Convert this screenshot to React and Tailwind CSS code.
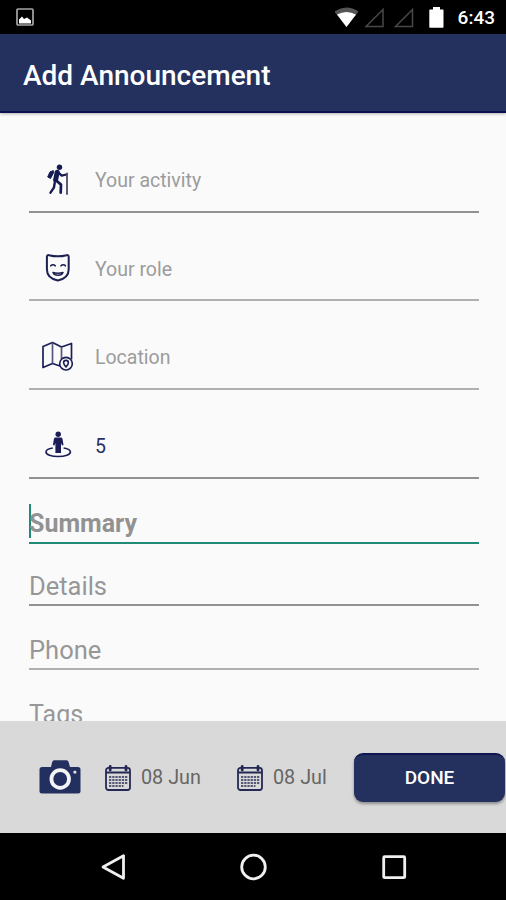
import React from "react";

function Hiker() {
  return (
    <svg viewBox="0 0 40 40" className="h-10 w-10 text-[#151a52]" fill="none" stroke="currentColor" strokeLinecap="round" strokeLinejoin="round">
      <circle cx="21.500" cy="6.200" r="2.700" fill="currentColor" stroke="none" />
      <path d="M15 9.700l-3 1.200-2.300 5 2.800 1.600 3.200-6z" fill="currentColor" strokeWidth="1" />
      <path d="M19.200 11.300l-1.600 7.700" strokeWidth="5" />
      <path d="M20.500 11.700l3.200 3 4.800-1.200" strokeWidth="2.300" />
      <path d="M18.800 20l4.200 3.600-.3 8" strokeWidth="2.700" />
      <path d="M16.700 22l-.8 4.700-3.400 5" strokeWidth="2.400" />
      <path d="M29 12.500V33" stroke="#4a4a62" strokeWidth="1.800" />
    </svg>
  );
}

function Mask() {
  return (
    <svg viewBox="0 0 40 40" className="h-10 w-10 text-[#1d2050]" fill="none" stroke="currentColor" strokeLinecap="round" strokeLinejoin="round">
      <path d="M8.900 6.700c0-1.200 1-1.900 2.200-1.500 5.700 1.500 11.700 1.500 17.400 0 1.200-.4 2.200.3 2.200 1.500v12.600C30.700 25.500 26 29.300 19.800 30.500 13.600 29.300 8.900 25.500 8.900 19.300z" strokeWidth="2" />
      <path d="M12.800 15.800c1.200-1.500 3.300-1.500 4.400 0M23 15.800c1.200-1.500 3.300-1.500 4.400 0" strokeWidth="1.600" />
      <path d="M15 22.500c3.200 1 6.800 1 10 0-.8 2-2.800 2.700-5 2.700s-4.200-.7-5-2.700z" strokeWidth="1.500" />
    </svg>
  );
}

function MapIcon() {
  return (
    <svg viewBox="0 0 40 40" className="h-10 w-10 text-[#1b1e56]" fill="none" stroke="currentColor" strokeWidth="1.700" strokeLinejoin="round">
      <path d="M23.500 28.500l-9-3-9.500 4V8.500l9.500-4L23.500 9l10-3.500v16" />
      <path d="M14.500 4.500V25.500M23.500 9v12" stroke="#55577e" />
      <circle cx="28" cy="25.700" r="6.300" fill="#fafafa" strokeWidth="1.600" />
      <path d="M28 29c-1.600-1.900-2.400-3.100-2.400-4.200a2.400 2.400 0 0 1 4.800 0c0 1.100-.8 2.300-2.400 4.200z" strokeWidth="1.600" />
    </svg>
  );
}

function Person() {
  return (
    <svg viewBox="0 0 40 40" className="h-10 w-10 text-[#1b1e56]" fill="currentColor">
      <circle cx="20.200" cy="7.200" r="2.700" />
      <path d="M17.600 10.500h5.200c1 0 1.500.6 1.700 1.500l1 6-1.500.6-1-2.700V26h-5.600V15.900l-1 2.700-1.500-.6 1-6c.2-.9.700-1.500 1.700-1.500z" />
      <path d="M14.800 21C10.800 21.700 8 23.100 8 24.900c0 2.700 5.200 4.600 12.200 4.600s12.200-1.900 12.200-4.600c0-1.800-2.800-3.200-6.800-3.900" fill="none" stroke="currentColor" strokeWidth="1.700" />
    </svg>
  );
}

function Camera() {
  return (
    <svg viewBox="0 0 42 34" className="h-[34px] w-[42px]">
      <path d="M3 7h9l1.200-5Q13.700.3 15.200.3h12.400q1.500 0 2 1.700l1.400 5h8Q41.500 7 41.500 9.500v21.500q0 2.500-2.500 2.500H3Q.5 33.500.5 31V9.500Q.5 7 3 7z" fill="#23305f" />
      <circle cx="21.200" cy="19" r="8.800" fill="#23305f" stroke="#f4f4f6" strokeWidth="3.800" />
      <rect x="34.500" y="10.800" width="2.800" height="2.800" rx=".7" fill="#e4e5ec" />
    </svg>
  );
}

function Calendar() {
  return (
    <svg viewBox="0 0 26 26" className="h-[26px] w-[26px]" fill="none" stroke="#242854">
      <rect x="1" y="2.800" width="24" height="22.200" rx="2.500" strokeWidth="1.800" />
      <path d="M1 7.500h24" strokeWidth="2" />
      <path d="M5.200 1.500v3.500M21 1.500v3.500" strokeWidth="2.800" strokeLinecap="round" />
      <path d="M4 12h18.500M4 15h18.500M4 18h18.500M4 21h14.500" stroke="#565975" strokeWidth="1.900" strokeDasharray="2.300 .9" />
    </svg>
  );
}

function IconRow({ icon, text, row, tone }) {
  return (
    <div className={`flex shrink-0 items-end border-b-2 pl-[9px] ${row}`}>
      {icon}
      <span className={`ml-[17px] flex h-10 items-center text-[19.500px] ${tone}`}>{text}</span>
    </div>
  );
}

export default function App() {
  return (
    <div className="flex h-[900px] w-[506px] flex-col overflow-hidden bg-[#fafafa] font-['Roboto','Liberation_Sans',sans-serif]">
      <div className="flex h-[34px] shrink-0 items-center bg-black pl-4 pr-[11px] text-white">
        <svg viewBox="0 0 18 18" className="h-[18px] w-[18px]">
          <rect x="1" y="1" width="16" height="16" rx="1" fill="none" stroke="#a5a5a5" strokeWidth="1.700" />
          <path d="M3 15.500v-4l3-3 2 2.500 3-1.500 4 3v3z" fill="#fff" />
        </svg>
        <svg viewBox="0 0 112 24" className="ml-auto h-6 w-[112px]">
          <path d="M-.5 6.500Q11.500-1.500 23.500 6.500L11.500 22z" fill="#555" />
          <path d="M2 9.500Q11.500 4.500 21 9.500L11.500 22z" fill="#fff" />
          <path d="M31 21.500h17V4.500zM60.500 21.500h17V4.500z" fill="none" stroke="#484848" strokeWidth="1.500" />
          <path d="M95 4.500h3V2h7v2.500h3q.5 0 .5.500v17q0 .7-.7.700H95q-.7 0-.7-.7V5.200q0-.7.700-.7z" fill="#fff" />
        </svg>
        <span className="ml-[11px] mt-[3px] text-[19px] font-medium">6:43</span>
      </div>

      <header className="z-10 flex h-[79px] shrink-0 items-center border-b-2 border-[#0b1150] bg-[#24315e] pl-[23px] pt-[7px] text-[28px] font-medium text-white shadow-[0_1px_3px_rgba(0,0,0,0.3)]">
        Add Announcement
      </header>

      <main className="flex min-h-0 flex-1 flex-col overflow-hidden pl-[29px] pr-[27px]">
        <IconRow icon={<Hiker />} text="Your activity" row="h-[100px] pb-[10px] border-[#929292]" tone="text-[#9c9c9c]" />
        <IconRow icon={<Mask />} text="Your role" row="h-[88px] pb-[9px] border-[#b0b0b0]" tone="text-[#9c9c9c]" />
        <IconRow icon={<MapIcon />} text="Location" row="h-[89px] pb-[10px] border-[#b0b0b0]" tone="text-[#9c9c9c]" />
        <IconRow icon={<Person />} text="5" row="h-[89px] pb-[10px] border-[#929292]" tone="text-[#2c2f62]" />
        <div className="flex h-[65px] shrink-0 items-end border-b-2 border-[#208a76] pb-[4px]">
          <div className="h-[34px] w-0.5 bg-[#208a76]" />
          <span className="-ml-0.5 text-[25px] font-bold leading-[29px] text-[#929292]">Summary</span>
        </div>
        <div className="flex h-[62px] shrink-0 items-end border-b-2 border-[#929292] pb-[3px] text-[25.500px] leading-[30px] text-[#979797]">Details</div>
        <div className="flex h-[64px] shrink-0 items-end border-b-2 border-[#b0b0b0] pb-[3px] text-[25.500px] leading-[30px] text-[#979797]">Phone</div>
        <div className="mt-[30px] shrink-0 text-[25px] leading-[30px] text-[#979797]">Tags</div>
      </main>

      <footer className="flex h-28 shrink-0 items-center bg-[#d9d9d9] pl-[39px] pr-px text-[19.800px] text-[#666]">
        <Camera />
        <div className="ml-[24px] flex items-center pt-px">
          <Calendar />
          <span className="ml-[10px] w-24 pt-px">08 Jun</span>
        </div>
        <div className="flex items-center pt-px">
          <Calendar />
          <span className="ml-[10px] w-[81px] pt-px">08 Jul</span>
        </div>
        <button className="h-[49px] w-[151px] shrink-0 rounded-[9px] border-t-2 border-[#10164f] bg-[#24315e] text-[19px] font-medium text-white shadow-[0_2px_3px_rgba(0,0,0,0.35)]">DONE</button>
      </footer>

      <nav className="flex h-[67px] shrink-0 items-center bg-black pl-[100px]">
        <svg viewBox="0 0 28 28" className="h-7 w-7" fill="none" stroke="#f0f0f0" strokeWidth="2.800" strokeLinejoin="round">
          <path d="M3 14L23.500 2.700v22.600z" />
        </svg>
        <svg viewBox="0 0 28 28" className="ml-[112px] h-7 w-7" fill="none" stroke="#f0f0f0" strokeWidth="2.800">
          <circle cx="13.500" cy="14" r="11.800" />
        </svg>
        <svg viewBox="0 0 28 28" className="ml-[112px] h-7 w-7" fill="none" stroke="#f0f0f0" strokeWidth="2.800" strokeLinejoin="round">
          <rect x="3.700" y="3.700" width="21" height="21" rx="1" />
        </svg>
      </nav>
    </div>
  );
}
